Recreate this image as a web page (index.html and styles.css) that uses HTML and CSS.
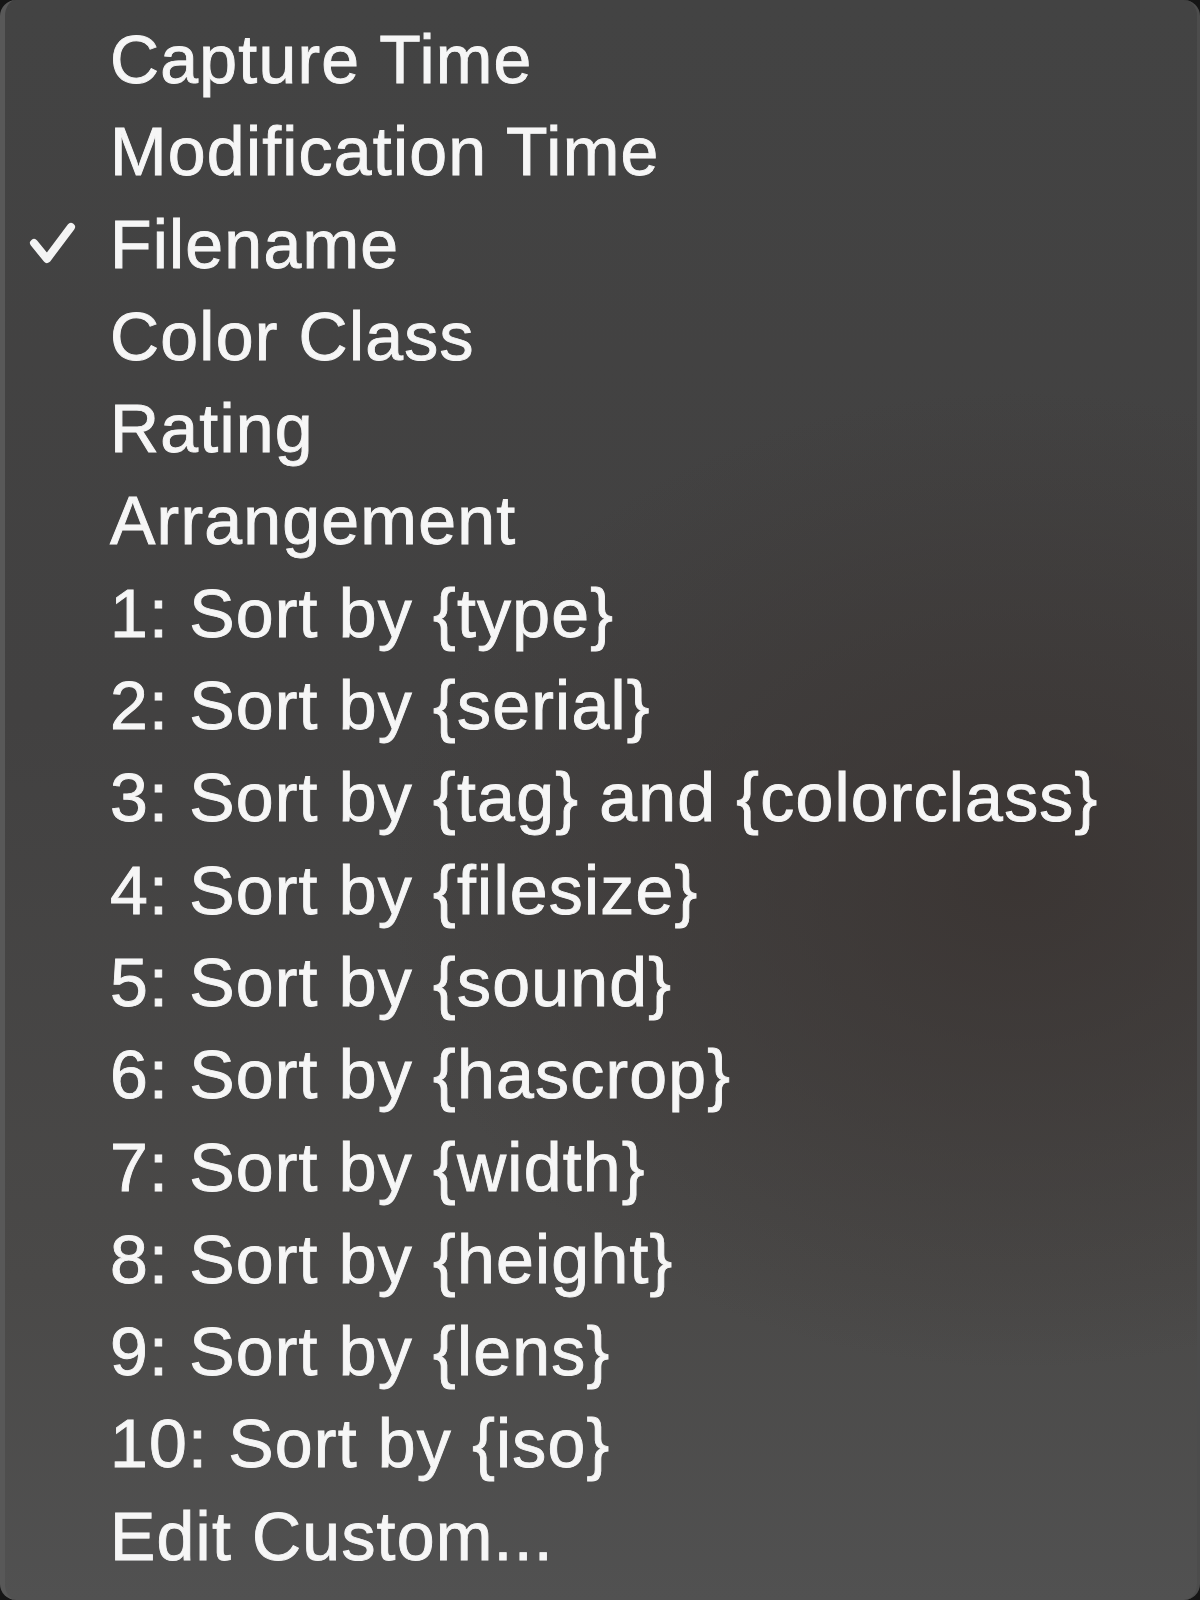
FILE: index.html
```html
<!DOCTYPE html>
<html>
<head>
<meta charset="utf-8">
<link rel="stylesheet" href="styles.css">
</head>
<body>
<div class="menu">
  <div class="item">Capture Time</div>
  <div class="item">Modification Time</div>
  <div class="item checked"><svg class="check" viewBox="0 0 48 44" width="48" height="44"><path d="M6 22 L19 38 L43 6" fill="none" stroke="#f4f4f4" stroke-width="8" stroke-linecap="round" stroke-linejoin="round"/></svg>Filename</div>
  <div class="item">Color Class</div>
  <div class="item">Rating</div>
  <div class="item">Arrangement</div>
  <div class="item">1: Sort by {type}</div>
  <div class="item">2: Sort by {serial}</div>
  <div class="item">3: Sort by {tag} and {colorclass}</div>
  <div class="item">4: Sort by {filesize}</div>
  <div class="item">5: Sort by {sound}</div>
  <div class="item">6: Sort by {hascrop}</div>
  <div class="item">7: Sort by {width}</div>
  <div class="item">8: Sort by {height}</div>
  <div class="item">9: Sort by {lens}</div>
  <div class="item">10: Sort by {iso}</div>
  <div class="item">Edit Custom...</div>
</div>
</body>
</html>
```
FILE: styles.css
```css
html, body {
  margin: 0;
  padding: 0;
  background: #151515;
}
.menu {
  box-sizing: border-box;
  width: 1200px;
  height: 1600px;
  border-radius: 16px;
  border-left: 5px solid #585858;
  border-right: 3px solid #4c4c4c;
  background:
    radial-gradient(ellipse 900px 700px at 85% 55%, rgba(58,52,50,0.9), rgba(58,52,50,0) 70%),
    linear-gradient(to bottom, #434343 0%, #424141 45%, #4a4948 80%, #515151 100%);
  padding: 13px 0 0 105px;
  font-family: "Liberation Sans", Arial, sans-serif;
  font-size: 68px;
  letter-spacing: 1.2px;
  -webkit-text-stroke: 0.9px #f6f6f6;
  color: #f6f6f6;
}
.item {
  position: relative;
  height: 92.3px;
  line-height: 92.3px;
  white-space: nowrap;
}
.check {
  position: absolute;
  left: -82px;
  top: 23px;
}
```
